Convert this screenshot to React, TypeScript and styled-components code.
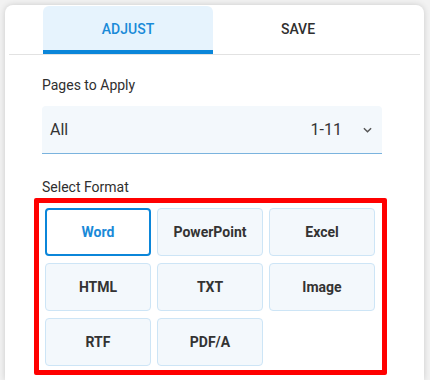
import React from 'react';
import styled, { createGlobalStyle } from 'styled-components';

const formats = ['Word', 'PowerPoint', 'Excel', 'HTML', 'TXT', 'Image', 'RTF', 'PDF/A'];

function App() {
  return (
    <>
      <GlobalStyle />
      <Card>
        <TabBar>
          <Tab active>ADJUST</Tab>
          <Tab>SAVE</Tab>
        </TabBar>
        <Body>
          <Label>Pages to Apply</Label>
          <Select>
            <SelectValue>All</SelectValue>
            <SelectRange>1-11</SelectRange>
            <Chevron viewBox="0 0 10 6">
              <path d="M1 1l4 4 4-4" fill="none" stroke="#555" strokeWidth="1.6" />
            </Chevron>
          </Select>
          <Label>Select Format</Label>
          <Highlight>
            <FormatGrid>
              {formats.map((f, i) => (
                <FormatButton key={f} selected={i === 0}>{f}</FormatButton>
              ))}
            </FormatGrid>
          </Highlight>
        </Body>
      </Card>
    </>
  );
}

const GlobalStyle = createGlobalStyle`
  html, body {
    margin: 0;
    background: #f2f2f2;
    font-family: Roboto, "Liberation Sans", sans-serif;
    overflow: hidden;
  }
`;

const Card = styled.div`
  margin: 5px 0 0 5px;
  width: 419px;
  height: 375px;
  box-sizing: border-box;
  padding: 1px 4px 0;
  background: #fff;
  border-radius: 8px 8px 0 0;
  box-shadow: 0 0 6px rgba(0, 0, 0, 0.16);
`;

const TabBar = styled.div`
  display: flex;
  justify-content: center;
  border-bottom: 1px solid #e2e2e2;
  padding-right: 3px;
`;

const Tab = styled.div<{ active?: boolean }>`
  width: 170px;
  height: 48px;
  box-sizing: border-box;
  display: flex;
  align-items: center;
  justify-content: center;
  padding-top: 1px;
  font-size: 14px;
  font-weight: 500;
  color: ${p => (p.active ? '#1a8ad8' : '#2f2f2f')};
  background: ${p => (p.active ? '#e6f3fd' : 'transparent')};
  border-bottom: 4px solid ${p => (p.active ? '#0b86d9' : 'transparent')};
  border-radius: 6px 6px 0 0;
`;

const Body = styled.div`
  width: 340px;
  margin-left: 33px;
  padding-top: 20px;
`;

const Label = styled.div`
  font-size: 14px;
  line-height: 20px;
  color: #2f2f2f;
`;

const Select = styled.div`
  margin: 11px 0 23px;
  height: 48px;
  box-sizing: border-box;
  display: flex;
  align-items: center;
  padding: 0 10px 0 8px;
  background: #f3f8fc;
  border-bottom: 1px solid #7ab3de;
  border-radius: 4px 4px 0 0;
  font-size: 16px;
  color: #333;
`;

const SelectValue = styled.span`
  flex: 1;
`;

const SelectRange = styled.span`
  margin-right: 21px;
`;

const Chevron = styled.svg`
  width: 9px;
  height: 6px;
`;

const Highlight = styled.div`
  margin: 1px 0 0 -8px;
  width: 353px;
  box-sizing: border-box;
  border: 5px solid #ff0000;
  border-radius: 2px;
  padding: 5px 7px 4px 6px;
`;

const FormatGrid = styled.div`
  display: grid;
  grid-template-columns: repeat(3, 106px);
  grid-auto-rows: 48px;
  column-gap: 6px;
  row-gap: 7px;
`;

const FormatButton = styled.div<{ selected?: boolean }>`
  display: flex;
  align-items: center;
  justify-content: center;
  box-sizing: border-box;
  border-radius: 4px;
  font-size: 14px;
  font-weight: 700;
  color: ${p => (p.selected ? '#1a8ad8' : '#333')};
  background: ${p => (p.selected ? '#fff' : '#f3f8fc')};
  border: ${p => (p.selected ? '2px solid #0b86d9' : '1px solid #cde5f6')};
`;

export default App;
